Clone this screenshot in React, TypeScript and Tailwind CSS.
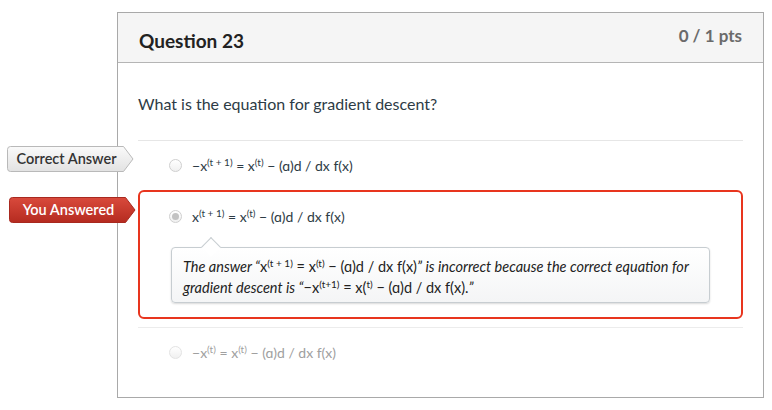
import React from 'react';

type Tag = 'correct' | 'wrong';

function AnswerTag({ kind }: { kind: Tag }) {
  const isWrong = kind === 'wrong';
  return (
    <div className="absolute left-[-131px] top-[5px] w-[127px] h-[26px]">
      <svg width="127" height="26" viewBox="0 0 127 26" className="absolute inset-0">
        <defs>
          <linearGradient id={`tag-${kind}`} x1="0" y1="0" x2="0" y2="1">
            <stop offset="0" stopColor={isWrong ? '#d94a3c' : '#fafafa'} />
            <stop offset="1" stopColor={isWrong ? '#b52b20' : '#e2e2e2'} />
          </linearGradient>
        </defs>
        <path
          d="M3.5 0.5H116.5L126 13L116.5 25.5H3.5Q0.5 25.5 0.5 22.5V3.5Q0.5 0.5 3.5 0.5Z"
          fill={`url(#tag-${kind})`}
          stroke={isWrong ? '#a8291f' : '#b9b9b9'}
        />
      </svg>
      <span
        className={`relative flex h-full w-[119px] items-center justify-center text-[14.5px] font-semibold ${isWrong ? 'text-white' : 'text-[#333]'}`}
      >
        {isWrong ? 'You Answered' : 'Correct Answer'}
      </span>
    </div>
  );
}

function Radio({ checked, faded }: { checked?: boolean; faded?: boolean }) {
  return (
    <div
      className={`flex h-[13px] w-[13px] shrink-0 items-center justify-center rounded-full border bg-gradient-to-b from-white to-[#f0f0f0] ${faded ? 'border-[#e3e3e3]' : 'border-[#cfcfcf]'}`}
    >
      {checked && <div className="h-[7px] w-[7px] rounded-full bg-[#c2c2c2]" />}
    </div>
  );
}

// superscript used inside the formulas
function Sup({ children }: { children: React.ReactNode }) {
  return <sup className="text-[10px] leading-none">{children}</sup>;
}

function Formula({ lhs }: { lhs: 'neg' | 'pos' | 'negt' }) {
  return (
    <span>
      {lhs === 'pos' ? '' : '−'}x<Sup>{lhs === 'negt' ? '(t)' : '(t + 1)'}</Sup> = x<Sup>(t)</Sup> − (ɑ)d / dx f(x)
    </span>
  );
}

export default function App() {
  return (
    <div className="h-[410px] w-[772px] overflow-hidden bg-white font-['Lato',sans-serif] text-[#2d3b45]">
      <div className="ml-[117px] mt-[12px] h-[386px] w-[647px] border border-[#a9a9a9]">
        <div className="flex h-[50px] items-start justify-between border-b border-[#b5b5b5] bg-[#f5f5f5] px-[21px]">
          <h2 className="mt-[14px] text-[19px] font-bold text-[#222]">Question 23</h2>
          <span className="mt-[10px] text-[17px] font-bold text-[#6b6b6b]">0 / 1 pts</span>
        </div>

        <div className="px-[20px]">
          <p className="mt-[30px] text-[16px] leading-[22px]">What is the equation for gradient descent?</p>

          <div className="mt-[25px] border-t border-[#e6e6e6]">
            <div className="relative flex h-[49px] items-center gap-[10px] pl-[31px] text-[14px]">
              <AnswerTag kind="correct" />
              <Radio />
              <Formula lhs="neg" />
            </div>

            <div className="relative rounded-[6px] border-2 border-[#e8351e] pb-[14px]">
              <AnswerTag kind="wrong" />
              <div className="flex h-[48px] items-center gap-[10px] pl-[29px] text-[14px]">
                <Radio checked />
                <Formula lhs="pos" />
              </div>
              <div className="relative ml-[31px] mt-[7px] w-[539px] rounded-[4px] border border-[#c7cdd1] bg-gradient-to-b from-white to-[#f4f5f6] px-[11px] pb-[4px] pt-[8px] text-[14.5px] italic leading-[21px] text-[#222] shadow-[0_1px_2px_rgba(0,0,0,0.15)]">
                <div className="absolute left-[32px] top-[-8px] h-[14px] w-[14px] rotate-45 border-l border-t border-[#c7cdd1] bg-white" />
                <p className="relative">
                  The answer “<span className="not-italic">x<Sup>(t + 1)</Sup> = x<Sup>(t)</Sup> − (ɑ)d / dx f(x)</span>” is incorrect because the correct equation for gradient descent is “<span className="not-italic">−x<Sup>(t+1)</Sup> = x(<Sup>t)</Sup> − (ɑ)d / dx f(x).</span>”
                </p>
              </div>
            </div>

            <div className="mt-[8px] flex h-[50px] items-center gap-[10px] border-t border-[#ececec] pl-[31px] text-[14px] text-[#a0a0a0]">
              <Radio faded />
              <Formula lhs="negt" />
            </div>
          </div>
        </div>
      </div>
    </div>
  );
}
